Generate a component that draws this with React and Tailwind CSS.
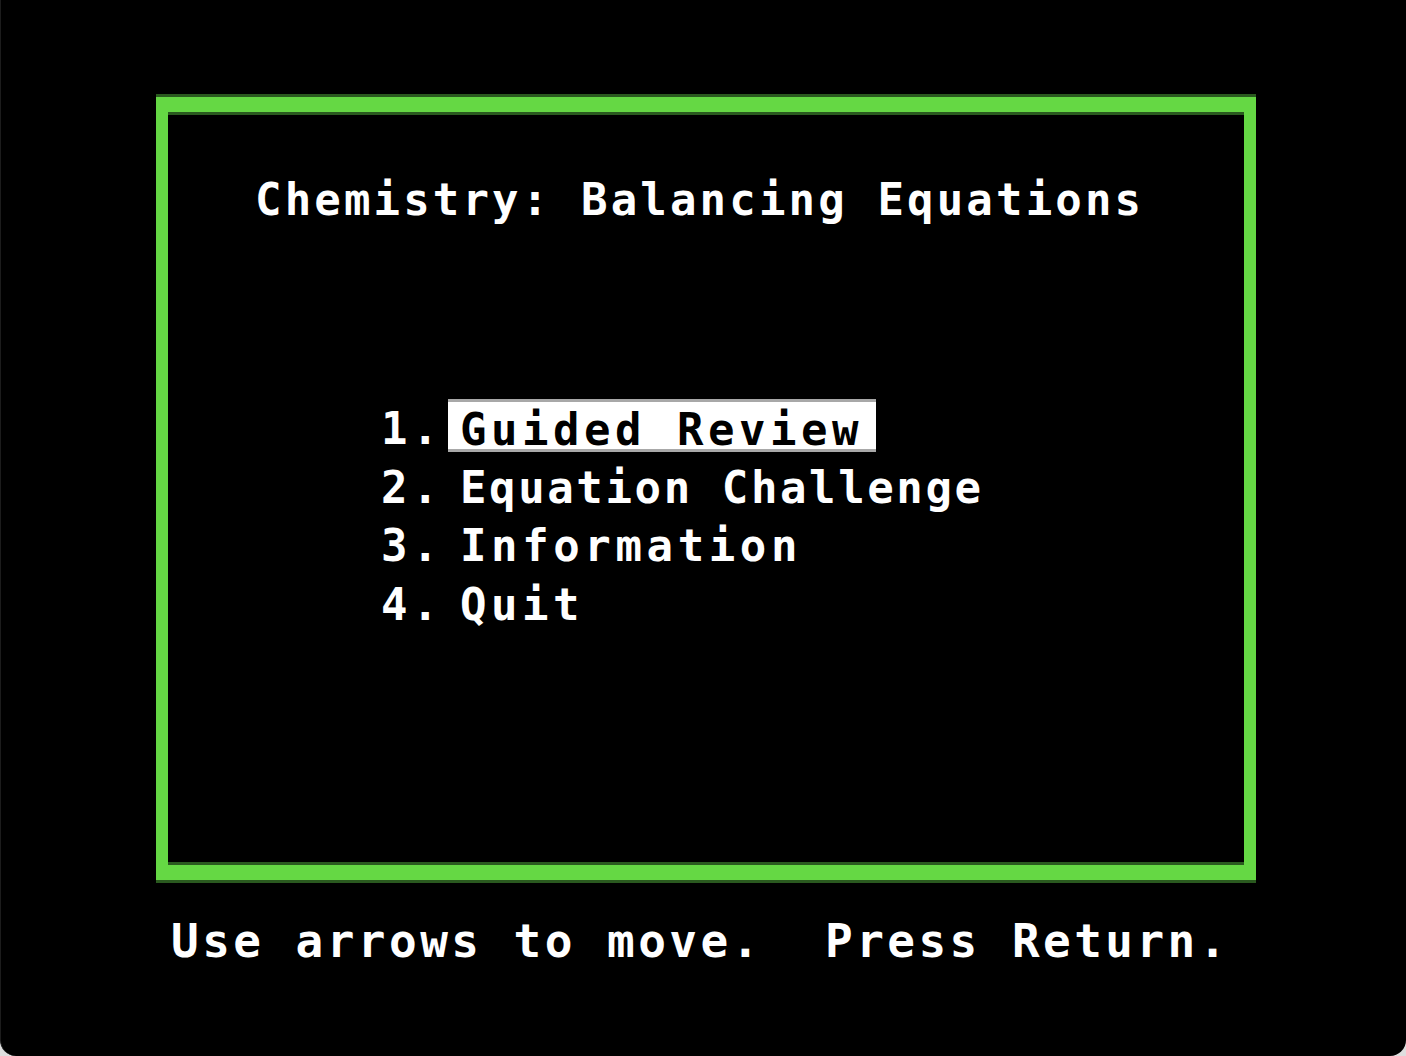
const mono = "font-['DejaVu_Sans_Mono','Liberation_Mono',monospace] font-bold";

const items = [
  { n: "1.", label: "Guided Review", active: true, track: "tracking-[4.5px]" },
  { n: "2.", label: "Equation Challenge", track: "tracking-[2.6px]" },
  { n: "3.", label: "Information", track: "tracking-[4.6px]" },
  { n: "4.", label: "Quit", track: "tracking-[4.5px]" },
];

const MenuRow = ({ n, label, active, track }) => (
  <div className="flex h-[58.7px] items-start">
    <span className="w-[67px] whitespace-pre text-[44px] leading-[59px] tracking-[4.5px] text-white">{n}</span>
    {active ? (
      <span className={`block h-[53px] w-[428px] overflow-visible whitespace-pre border-y-[3px] border-[#a8a8a8] bg-white pl-[12px] text-[44px] leading-[55px] text-black ${track}`}>
        {label}
      </span>
    ) : (
      <span className={`whitespace-pre pl-[12px] text-[44px] leading-[59px] text-white ${track}`}>{label}</span>
    )}
  </div>
);

export default function App() {
  return (
    <div className="min-h-screen w-full bg-[#dedede]">
      <div className={`h-[1056px] w-[1406px] overflow-hidden rounded-b-[16px] border-l border-[#1c1c1c] bg-black ${mono}`}>
        <div className="ml-[155px] mt-[94px] w-[1100px] border-y-[3px] border-[#2a5a1f] bg-[#65d844] px-[12px] py-[15px]">
          <div className="h-[753px] border-y-[3px] border-[#2a5a1f] bg-black">
            <div className="pl-[87px] pt-[63px] whitespace-pre text-[44px] leading-[44px] tracking-[3.15px] text-white">
              Chemistry: Balancing Equations
            </div>
            <div className="ml-[213px] mt-[177px] flex flex-col">
              {items.map((it) => (
                <MenuRow key={it.n} {...it} />
              ))}
            </div>
          </div>
        </div>
        <div className="ml-[170px] mt-[35px] whitespace-pre text-[46px] leading-[46px] tracking-[3.45px] text-white">
          Use arrows to move.  Press Return.
        </div>
      </div>
    </div>
  );
}
